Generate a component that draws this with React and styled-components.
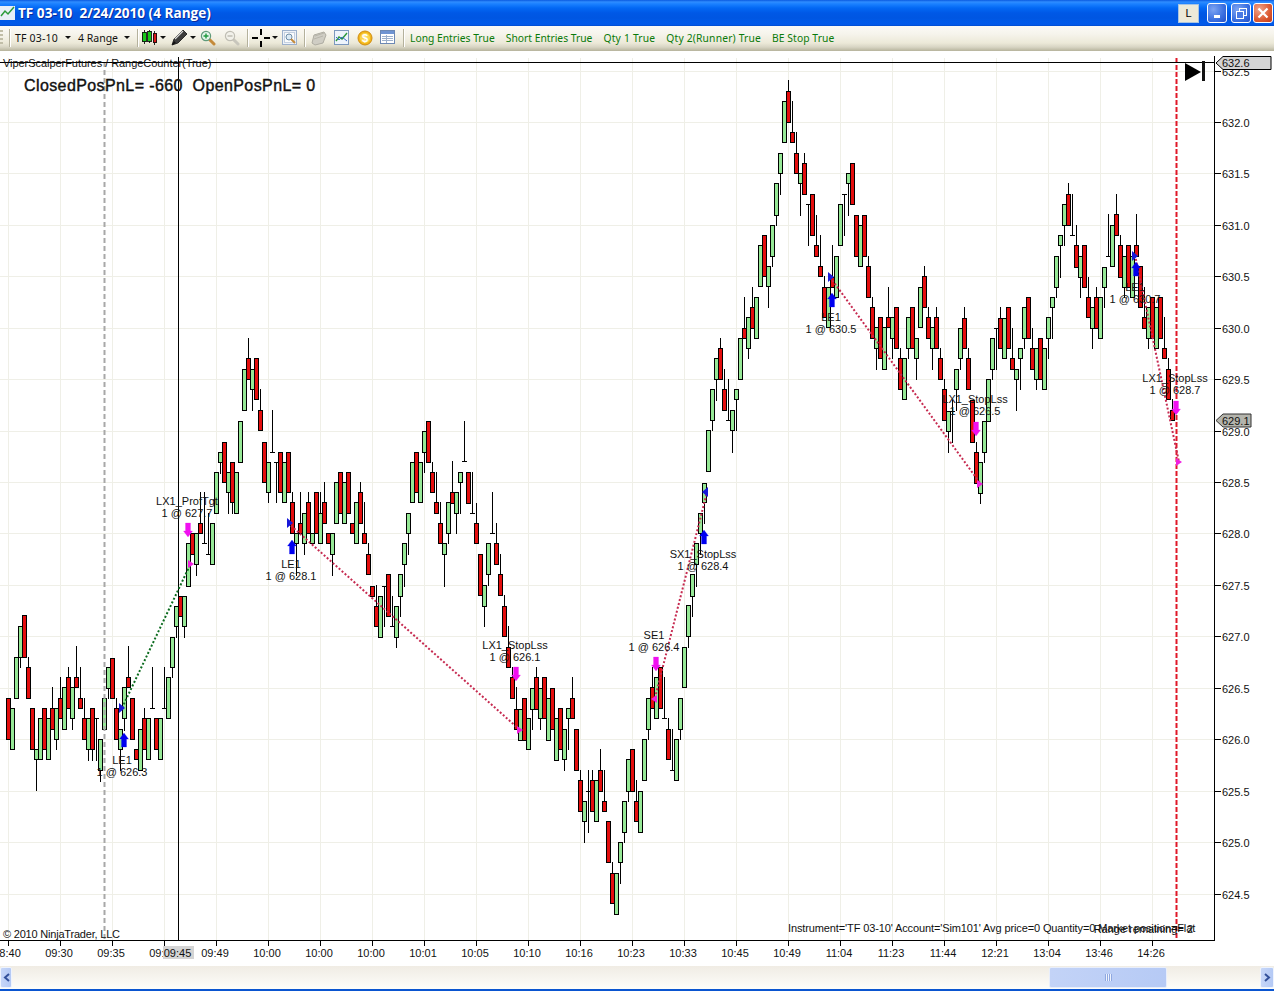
import React from 'react'
import styled, { createGlobalStyle } from 'styled-components'

const GlobalStyle = createGlobalStyle`
  html, body { margin: 0; padding: 0; background: #fff; }
  #root { width: 1274px; height: 991px; overflow: hidden; }
`

// ---- window chrome ----
const Window = styled.div`
  width: 1274px;
  height: 991px;
  display: flex;
  flex-direction: column;
  overflow: hidden;
  background: #fff;
`
const TitleBar = styled.div`
  height: 26px;
  flex: none;
  display: flex;
  align-items: center;
  padding-left: 0;
  background: linear-gradient(to bottom, #0a5ae0 0, #2f8dff 2px, #1a80ff 4px, #0368f4 8px, #0058e6 13px, #0056e2 18px, #005ae9 22px, #0258e8 25px, #0048c4 26px);
`
const AppIcon = styled.svg`
  width: 16px;
  height: 16px;
  margin: 0 2px 0 0;
  flex: none;
`
const TitleText = styled.span`
  font: bold 13.6px "Open Sans", "Liberation Sans", sans-serif;
  color: #fff;
  text-shadow: 1px 1px 0 #0a2a9a;
  white-space: pre;
  flex: 1;
  margin-top: -1px;
`
const WinButtons = styled.div`
  display: flex;
  align-items: center;
  height: 100%;
  padding-right: 1px;
`
const LButton = styled.div`
  width: 21px;
  height: 19px;
  box-sizing: border-box;
  margin-right: 8px;
  background: #ece9d8;
  border: 1px solid #a9c4e0;
  color: #000;
  font: 11px "Liberation Sans", sans-serif;
  display: flex;
  align-items: center;
  justify-content: center;
`
const WinButton = styled.div`
  width: 20px;
  height: 20px;
  box-sizing: border-box;
  margin-left: ${p => p.$gap || 0}px;
  border: 1px solid #fff;
  border-radius: 3px;
  display: flex;
  align-items: center;
  justify-content: center;
  background: ${p => p.$close
    ? 'radial-gradient(circle at 30% 30%, #f0a58c, #dc5a32 60%, #c0391a)'
    : 'radial-gradient(circle at 30% 30%, #7da4f2, #3a6fe0 60%, #2450c8)'};
`

// ---- toolbar ----
const Toolbar = styled.div`
  height: 25px;
  box-sizing: border-box;
  padding-bottom: 2px;
  flex: none;
  display: flex;
  align-items: center;
  background: linear-gradient(to bottom, #fbfaf6 0, #f6f4ec 8px, #ece9d8 17px, #d8d5c4 21px, #b6b39c 25px);
`
const Grip = styled.div`
  width: 3px;
  height: 16px;
  margin-right: 6px;
  background: repeating-linear-gradient(to bottom, #c1bea8 0 2px, transparent 2px 4px);
`
const Sep = styled.div`
  width: 1px;
  height: 18px;
  margin-left: ${p => p.$ml || 0}px;
  background: #b4b19c;
  border-right: 1px solid #fff;
  flex: none;
`
const Drop = styled.div`
  width: ${p => p.$w}px;
  padding: 0 7px 0 ${p => p.$pl || 0}px;
  box-sizing: border-box;
  display: flex;
  align-items: center;
  justify-content: space-between;
  font: 10.5px "Noto Sans", "Open Sans", sans-serif;
  letter-spacing: ${p => p.$ls || 0}px;
  color: #111;
`
const Caret = styled.i`
  width: 0;
  height: 0;
  flex: none;
  border-left: 3px solid transparent;
  border-right: 3px solid transparent;
  border-top: 3px solid #111;
`
const IconBtn = styled.div`
  width: ${p => p.$w}px;
  padding-left: ${p => p.$pl || 0}px;
  box-sizing: border-box;
  display: flex;
  align-items: center;
  justify-content: ${p => (p.$pl ? 'flex-start' : 'center')};
  gap: 2px;
  height: 20px;
`
const TradeButtons = styled.div`
  display: flex;
  margin-left: 5px;
  gap: 11px;
`
const TradeButton = styled.span`
  font: 10.3px "Noto Sans", "Open Sans", sans-serif;
  letter-spacing: ${p => p.$ls || 0}px;
  color: #0a7a0a;
  white-space: nowrap;
`

// ---- chart ----
const ChartArea = styled.div`
  flex: 1;
  min-height: 0;
`
const ChartSvg = styled.svg`
  display: block;
  width: 1274px;
  height: 915px;
`
const Bar = styled.g`
  shape-rendering: crispEdges;
`
const Label = styled.text`
  font: 11px "Liberation Sans", sans-serif;
  fill: #111;
  letter-spacing: ${p => p.$ls || 0}px;
  text-anchor: ${p => p.$anchor || 'start'};
`
const Headline = styled.text`
  font: 16px "Liberation Sans", sans-serif;
  fill: #111;
  stroke: #111;
  stroke-width: 0.4px;
  letter-spacing: 0.4px;
  white-space: pre;
`

// ---- scrollbar ----
const ScrollBar = styled.div`
  height: 23px;
  flex: none;
  display: flex;
  align-items: center;
  justify-content: space-between;
  background: linear-gradient(to bottom, #f0ece4, #fdfdfa);
  position: relative;
`
const ScrollBtn = styled.div`
  width: ${p => p.$w}px;
  height: 21px;
  background: linear-gradient(to right, #c6d6f8, #b4c9f5);
  border: 1px solid #eef3fd;
  border-radius: 2px;
  color: #33519b;
  display: flex;
  align-items: center;
  justify-content: center;
  box-sizing: border-box;
`
const ScrollThumb = styled.div`
  position: absolute;
  left: 1049px;
  top: 1px;
  width: 118px;
  height: 21px;
  box-sizing: border-box;
  background: linear-gradient(to right, #c3d3f7, #b6caf5);
  border: 1px solid #e8eefb;
  border-radius: 2px;
  display: flex;
  align-items: center;
  justify-content: center;
`
const ThumbGrip = styled.div`
  width: 7px;
  height: 7px;
  background: repeating-linear-gradient(to right, #8fa8e0 0 1px, #eef3fd 1px 2px);
`
const WindowEdge = styled.div`
  height: 2px;
  flex: none;
  background: #0a55d0;
`

// ---- data ----
const R = (top, bot, hi = top, lo = bot) => ({ c: 'r', top, bot, hi, lo })
const G = (top, bot, hi = top, lo = bot) => ({ c: 'g', top, bot, hi, lo })
const D = (hi, lo, y) => ({ c: 'd', top: y, bot: y, hi, lo })

// one bar every 4px, starting at x=8
const BARS = [
  R(698,739), G(708,749), G(657,698), G(626,657,626,667), R(615,657), R(667,698,657), R(708,749), G(749,759,749,790),
  G(718,759), R(708,749), G(718,759), R(708,729,687), G(708,739,708,749), R(698,718,677), G(687,729), R(677,708,667),
  G(687,718,687,729), R(677,687,646), R(698,708,667), R(718,739,698), G(718,749,718,760), R(708,749,708,760), D(718,760,718), G(739,770,739,781),
  G(698,729), G(667,688,667,698), R(658,698), R(708,739,698), G(729,749,729,770), G(687,718,687,730), R(677,687,646), R(698,739),
  R(749,759), G(729,770), R(718,749,708), G(718,759), D(667,708,708), R(718,749), G(718,759), D(667,708,708),
  G(677,718), G(637,667,637,677), G(606,626,606,637), R(596,616), G(596,626,596,637), G(543,586), R(533,554), G(533,564,533,575),
  R(523,533,492), D(492,543,543), D(513,554,554), G(523,564), G(472,513), G(452,462,452,473), R(442,482), G(472,492,472,513),
  R(462,502,462,513), G(472,513), G(421,462), G(369,410), R(358,379,338), G(369,389,369,410), R(358,399), R(410,430,389),
  R(442,482), G(462,492,462,502), D(410,452,452), D(462,502,462), R(452,492), G(462,502), R(452,492), R(502,533,492),
  G(533,543,533,575), R(523,533,492), G(513,543,513,554), R(502,533,492), G(533,543), R(492,533), G(513,543,492,543), R(502,523,482),
  R(533,543), G(533,554,533,575), G(482,523), R(472,513), G(482,523), R(472,513), R(523,533), G(502,543),
  R(492,523,482), R(533,543,502), R(554,574,543), R(586,596), R(606,626,585), G(596,637), D(586,626,586), R(574,616),
  D(596,626,626), G(606,637,606,647), G(574,596,574,616), G(543,564,543,586), G(513,533,513,554), G(462,502), R(452,492), G(462,502),
  G(431,452,431,472), R(421,462), R(472,492,462), R(502,513,472), R(523,543,502), G(543,554,543,586), G(502,533,502,543), R(492,503,461),
  G(492,513,492,533), G(472,482,472,513), D(421,461,461), R(472,503), D(472,513,513), R(523,543,503), R(554,595), G(585,606,585,626),
  G(543,574,543,585), D(492,533,533), R(543,564,523), R(574,595,554), R(606,636,595), R(647,667,626), R(677,698,667), R(709,729,687),
  G(709,740), R(698,740), G(718,749), G(688,709,688,729), R(677,709,667), G(688,718,688,729), R(677,718), G(698,740),
  R(688,729), G(718,760), R(708,749), G(729,759,729,770), G(708,718,708,749), R(698,718,677), R(729,770), R(780,811,770),
  G(801,821,801,842), D(770,832,791), R(780,811,770), G(780,821), R(770,791,749), R(801,811,770), R(821,862), R(873,903,862),
  G(873,914), G(842,862,842,883), G(801,832,801,842), G(759,791,759,801), R(749,791), R(801,821,780), G(791,832), G(739,780),
  G(698,729,698,739), R(687,708,667), G(677,718), R(667,708), D(677,718,718), R(729,759,718), D(729,770,770), G(739,780),
  G(698,729,698,739), G(647,687), G(605,636,605,647), G(574,596,574,616), G(543,564,543,586), G(513,533,513,554), G(483,502,483,523), G(430,471),
  G(389,420,389,430), G(358,379,358,400), R(348,379,338), R(389,410,369), D(379,420,420), G(410,430,410,452), G(389,399,389,430), G(338,379),
  R(328,338,297), G(317,348,317,358), R(307,328,287), G(297,338), G(245,286), R(235,276), G(266,286,266,307), G(225,256,225,266),
  G(183,215,183,225), G(153,173,153,194), G(101,142), R(91,122,80), R(132,142,101), R(153,173,132), G(173,183,173,215), R(163,194,153),
  D(204,245,204), R(194,235), R(245,256,215), R(266,276,235), R(287,317,276), G(287,327), R(277,287,245), G(256,297),
  G(204,245), D(194,235,194), G(173,183,173,215), R(163,204), R(215,256), G(225,266), R(215,256), R(266,297,256),
  R(307,338,297), G(327,348,327,369), R(317,358), G(327,369), R(317,327,287), G(317,338,317,358), R(307,348), R(358,389,348),
  G(358,399), G(317,348,317,358), R(307,348), G(338,358,338,379), G(287,327), R(276,307,266), R(317,338,307), G(327,348,327,369),
  R(317,348,307), R(358,379,348), R(389,420,379), G(411,431,411,452), D(400,442,411), G(369,389,369,410), G(328,358,328,369), R(318,348,307),
  R(358,389,348), R(400,442), R(452,483,442), G(462,493,462,503), G(421,452,421,462), G(379,421), G(338,369,338,379), D(328,369,328),
  R(318,348,307), G(318,358), R(307,348), R(358,369,328), G(369,379,369,410), G(348,358,348,389), G(307,338,307,348), R(297,338),
  R(348,369,328), G(348,379,348,389), R(338,379), G(348,389), G(317,338,317,358), G(297,307,297,338), G(256,287,256,297), G(235,245,235,277),
  G(204,225,204,245), R(194,225,183), D(194,235,235), R(245,267,225), G(256,277,256,297), R(245,287), R(297,317,277), G(307,328,307,348),
  R(297,328,287), G(297,338), G(267,287,267,307), D(214,256,256), G(225,266), R(214,235,194), R(245,277,235), G(256,287,256,297),
  R(245,287), G(256,297), R(245,256,214), R(266,307), R(317,328,287), G(307,338,307,348), R(297,338), G(307,348),
  R(297,338), R(348,358,317), R(369,399,358), R(410,420,399),
]

const TIMES = ['08:40','09:30','09:35','09:40','09:49','10:00','10:00','10:00','10:01','10:05','10:10','10:16','10:23','10:33','10:45','10:49','11:04','11:23','11:44','12:21','13:04','13:46','14:26']
const PRICES = ['632.5','632.0','631.5','631.0','630.5','630.0','629.5','629.0','628.5','628.0','627.5','627.0','626.5','626.0','625.5','625.0','624.5']
const priceY = i => Math.round(71.5 + i * 51.44)
const gridY = i => priceY(i) - 0.5

const TRADE_LINES = [
  { x1: 122, y1: 708, x2: 191, y2: 563, color: '#0b6b1e' },
  { x1: 288, y1: 523, x2: 520, y2: 730, color: '#c62a50' },
  { x1: 655, y1: 698, x2: 707, y2: 492, color: '#c62a50' },
  { x1: 830, y1: 277, x2: 980, y2: 483, color: '#c62a50' },
  { x1: 1135, y1: 255, x2: 1179, y2: 462, color: '#c62a50' },
]
const UP_ARROWS = [[124, 733], [292, 540], [704, 530], [832, 293], [1136, 262]]
const DOWN_ARROWS = [[188, 523], [516, 667], [656, 657], [976, 422], [1176, 401]]
const BLUE_MARKS = [[120, 708, 1], [288, 523, 1], [707, 492, -1], [829, 277, 1], [1133, 256, 1]]
const PINK_MARKS = [[191, 564, -1], [520, 730, -1], [654, 699, 1], [980, 484, -1], [1179, 462, -1]]
const NOTES = [
  [187, 505, 'LX1_ProfTgt', '1 @ 627.7'],
  [122, 764, 'LE1', '1 @ 626.3'],
  [291, 568, 'LE1', '1 @ 628.1'],
  [515, 649, 'LX1_StopLss', '1 @ 626.1'],
  [654, 639, 'SE1', '1 @ 626.4'],
  [703, 558, 'SX1_StopLss', '1 @ 628.4'],
  [831, 321, 'LE1', '1 @ 630.5'],
  [975, 403, 'LX1_StopLss', '1 @ 626.5'],
  [1135, 291, 'LE1', '1 @ 630.7'],
  [1175, 382, 'LX1_StopLss', '1 @ 628.7'],
]
const GRID = '#efefe7'

// ---- icons ----
const Candles = () => (
  <svg width="18" height="17" viewBox="0 0 18 17" shapeRendering="crispEdges">
    <path d="M2.500 0v16M8.500 0v15M14.500 1v16" stroke="#111" />
    <rect x="0.500" y="2.500" width="4" height="11" fill="#18c818" stroke="#111" />
    <rect x="6.500" y="1.500" width="4" height="11" fill="#18c818" stroke="#111" />
    <rect x="12.500" y="3.500" width="4" height="11" fill="#d81818" stroke="#111" />
  </svg>
)
const Pencil = () => (
  <svg width="17" height="17" viewBox="0 0 17 17">
    <path d="M1 16l2-6L12 1l4 4-9 9z" fill="#3c3c3c" stroke="#111" strokeWidth="0.8" />
    <path d="M4 10l8-8" stroke="#d8d8d8" strokeWidth="1.2" />
    <path d="M1 16l2-4 2 2z" fill="#111" />
  </svg>
)
const Magnifier = ({ active, plus }) => (
  <svg width="16" height="16" viewBox="0 0 16 16">
    <path d="M9 9l5 5" stroke={active ? '#c48a3a' : '#c8c6bc'} strokeWidth="3" strokeLinecap="round" />
    <circle cx="6" cy="6" r="4.600" fill={active ? '#e4f4ea' : '#f2f1ea'} stroke={active ? '#5f9a7a' : '#c0beb4'} strokeWidth="1.200" />
    <path d={plus ? 'M3.500 6h5M6 3.500v5' : 'M3.500 6h5'} stroke={active ? '#1f9a3f' : '#bdbbb0'} strokeWidth="1.400" />
  </svg>
)
const Crosshair = () => (
  <svg width="18" height="18" viewBox="0 0 18 18" shapeRendering="crispEdges">
    <path d="M0 9h6M12 9h6M9 0v6M9 12v6" stroke="#000" strokeWidth="2" />
  </svg>
)
const FrameZoom = () => (
  <svg width="16" height="16" viewBox="0 0 16 16">
    <rect x="0.500" y="0.500" width="14" height="14" fill="#eef2f8" stroke="#9cb0cc" />
    <rect x="2.500" y="2.500" width="10" height="10" fill="#fbfcfd" stroke="#c4d0e0" />
    <circle cx="7" cy="7" r="3" fill="#dcebf6" stroke="#6f8da8" />
    <path d="M9 9l4 4" stroke="#c48a3a" strokeWidth="2" />
  </svg>
)
const GrayStack = () => (
  <svg width="16" height="16" viewBox="0 0 16 16">
    <path d="M1 13l2-8 10-3 2 3-3 8-8 2z" fill="#cfcdc4" stroke="#aeaca2" />
    <path d="M4 6l9-3M3 9l9-3" stroke="#b8b6ac" />
  </svg>
)
const MiniChart = () => (
  <svg width="16" height="16" viewBox="0 0 16 16">
    <rect x="0.500" y="0.500" width="14" height="14" fill="#eef4fc" stroke="#7c98be" />
    <path d="M2 11l3-4 3 2 5-6" fill="none" stroke="#2a9a3a" strokeWidth="1.400" />
    <path d="M2 7l3 3 3-3 5 4" fill="none" stroke="#3c6cc8" />
  </svg>
)
const Coin = () => (
  <svg width="16" height="16" viewBox="0 0 16 16">
    <circle cx="8" cy="8" r="7" fill="#f2b61c" stroke="#d08c10" />
    <circle cx="8" cy="8" r="5" fill="#fbd650" />
    <text x="8" y="12" textAnchor="middle" fontSize="11" fontWeight="bold" fontFamily="Liberation Sans" fill="#fff">$</text>
  </svg>
)
const TableIcon = () => (
  <svg width="16" height="15" viewBox="0 0 16 15" shapeRendering="crispEdges">
    <rect x="0.500" y="0.500" width="14" height="13" fill="#fff" stroke="#6c88b4" />
    <rect x="1" y="1" width="13" height="3" fill="#6f94d2" />
    <path d="M2 6.500h11M2 8.500h11M2 10.500h11M6.500 5v8" stroke="#9cb0cc" />
  </svg>
)

const Candle = ({ bar, x }) => {
  if (bar.c === 'd') {
    return (
      <Bar>
        <line x1={x + 0.5} x2={x + 0.5} y1={bar.hi} y2={bar.lo + 1} stroke="#000" />
        <line x1={x - 2} x2={x + 3} y1={bar.top + 0.5} y2={bar.top + 0.5} stroke="#000" />
      </Bar>
    )
  }
  return (
    <Bar>
      <line x1={x + 0.5} x2={x + 0.5} y1={bar.hi} y2={bar.lo + 1} stroke="#000" />
      <rect x={x - 1.5} y={bar.top + 0.5} width="4" height={bar.bot - bar.top} fill={bar.c === 'r' ? '#e40e0e' : '#96e896'} stroke="#000" />
    </Bar>
  )
}

const Chart = () => (
  <ChartSvg viewBox="0 51 1274 915">
    {/* grid */}
    <g shapeRendering="crispEdges">
      {PRICES.map((p, i) => <line key={i} x1="0" x2="1214" y1={gridY(i)} y2={gridY(i)} stroke={GRID} />)}
      {TIMES.map((t, i) => <line key={i} x1={8.5 + i * 52} x2={8.5 + i * 52} y1="58" y2="940" stroke={GRID} />)}
    </g>

    {BARS.map((bar, i) => <Candle key={i} bar={bar} x={8 + i * 4} />)}

    {/* cursors */}
    <line x1="104.500" x2="104.500" y1="62" y2="940" stroke="#a8a8a8" strokeWidth="2" strokeDasharray="5 3" />
    <line x1="178.500" x2="178.500" y1="57" y2="940" stroke="#000" />
    <line x1="1176.500" x2="1176.500" y1="58" y2="940" stroke="#e01828" strokeWidth="2" strokeDasharray="5 2" />

    {/* trades */}
    {TRADE_LINES.map((l, i) => (
      <line key={i} x1={l.x1} y1={l.y1} x2={l.x2} y2={l.y2} stroke={l.color} strokeWidth="2" strokeDasharray="2 2" />
    ))}
    {UP_ARROWS.map(([x, y], i) => (
      <path key={i} d={`M${x} ${y}l4.500 6h-2v8h-5v-8h-2z`} fill="#0000f0" stroke="#0000f0" strokeOpacity="0.25" />
    ))}
    {DOWN_ARROWS.map(([x, y], i) => (
      <path key={i} d={`M${x - 2.5} ${y}h5v8h2l-4.500 6-4.500-6h2z`} fill="#f010f0" stroke="#f010f0" strokeOpacity="0.25" />
    ))}
    {BLUE_MARKS.map(([x, y, d], i) => (
      <path key={i} d={`M${x + 5 * d} ${y}l${-6 * d} -5v10z`} fill="#1818d8" />
    ))}
    {PINK_MARKS.map(([x, y, d], i) => (
      <path key={i} d={`M${x - 3 * d} ${y}l${6 * d} -4v8z`} fill="#f020e0" />
    ))}
    {NOTES.map(([x, y, a, b], i) => (
      <g key={i}>
        <Label $anchor="middle" x={x} y={y}>{a}</Label>
        <Label $anchor="middle" x={x} y={y + 12}>{b}</Label>
      </g>
    ))}

    {/* frame and axes */}
    <g shapeRendering="crispEdges">
      <line x1="0" x2="1214" y1="62.500" y2="62.500" stroke="#000" />
      <line x1="0" x2="1215" y1="940.500" y2="940.500" stroke="#000" />
      <line x1="1214.500" x2="1214.500" y1="56" y2="941" stroke="#000" />
      {PRICES.map((p, i) => <line key={i} x1="1215" x2="1221" y1={gridY(i)} y2={gridY(i)} stroke="#000" />)}
      {TIMES.map((t, i) => <line key={i} x1={8.5 + i * 52} x2={8.5 + i * 52} y1="941" y2="946" stroke="#000" />)}
    </g>
    {PRICES.map((p, i) => <Label key={i} x="1222" y={priceY(i) + 4}>{p}</Label>)}
    {TIMES.map((t, i) => <Label key={i} $anchor="middle" x={7 + i * 52} y="957">{t}</Label>)}

    {/* crosshair time */}
    <rect x="163" y="946" width="31" height="13" fill="#d4d4d4" />
    <Label $anchor="middle" x="177.500" y="957">09:45</Label>

    {/* price tags */}
    <path d="M1216 63l7-6.500h48v13h-48z" fill="#d4d4d4" stroke="#000" />
    <Label x="1222" y="67">632.6</Label>
    <path d="M1216 420.500l7-6.500h28v13h-28z" fill="#b4b4ac" stroke="#333" />
    <Label x="1222" y="425">629.1</Label>

    {/* jump-to-end button */}
    <path d="M1185 63l16 9-16 9z" fill="#000" />
    <rect x="1202" y="61" width="3" height="20" fill="#111" />

    <Label x="3" y="67" $ls={-0.05}>ViperScalperFutures / RangeCounter(True)</Label>
    <Headline x="24" y="91" xmlSpace="preserve">ClosedPosPnL= -660  OpenPosPnL= 0</Headline>
    <Label x="3" y="938" $ls={-0.2}>© 2010 NinjaTrader, LLC</Label>
    <Label x="788" y="932" $ls={-0.12}>Instrument='TF 03-10' Account='Sim101' Avg price=0 Quantity=0 Market position=Flat</Label>
    <Label $anchor="end" x="1193" y="933">Range remaining= 2</Label>
  </ChartSvg>
)

export default function App() {
  return (
    <Window>
      <GlobalStyle />
      <TitleBar>
        <AppIcon viewBox="0 0 16 16">
          <rect width="15" height="14" y="1" fill="#e8eef8" />
          <path d="M1 11l4-5 3 3 6-7" fill="none" stroke="#2a9a3a" strokeWidth="1.500" />
        </AppIcon>
        <TitleText>TF 03-10  2/24/2010 (4 Range)</TitleText>
        <WinButtons>
          <LButton>L</LButton>
          <WinButton>
            <svg width="9" height="9" viewBox="0 0 9 9"><rect x="1" y="6" width="6" height="3" fill="#fff" /></svg>
          </WinButton>
          <WinButton $gap={4}>
            <svg width="11" height="11" viewBox="0 0 11 11" fill="none" stroke="#fff"><rect x="3.500" y="0.500" width="7" height="7" /><rect x="0.500" y="3.500" width="7" height="7" fill="#4a7ae4" /></svg>
          </WinButton>
          <WinButton $gap={2} $close>
            <svg width="12" height="12" viewBox="0 0 12 12"><path d="M1.500 1.500l9 9M10.500 1.500l-9 9" stroke="#fff" strokeWidth="2.200" /></svg>
          </WinButton>
        </WinButtons>
      </TitleBar>

      <Toolbar>
        <Grip />
        <Sep />
        <Drop $w={67} $pl={4} $ls={0.2}>TF 03-10<Caret /></Drop>
        <Drop $w={59}>4 Range<Caret /></Drop>
        <Sep />
        <IconBtn $w={27} $pl={3}><Candles /><Caret /></IconBtn>
        <IconBtn $w={30} $pl={5}><Pencil /><Caret /></IconBtn>
        <IconBtn $w={24}><Magnifier active plus /></IconBtn>
        <IconBtn $w={24}><Magnifier /></IconBtn>
        <Sep $ml={3} />
        <IconBtn $w={29} $pl={3}><Crosshair /><Caret /></IconBtn>
        <IconBtn $w={24}><FrameZoom /></IconBtn>
        <Sep $ml={2} />
        <IconBtn $w={26}><GrayStack /></IconBtn>
        <IconBtn $w={20}><MiniChart /></IconBtn>
        <IconBtn $w={26}><Coin /></IconBtn>
        <IconBtn $w={20}><TableIcon /></IconBtn>
        <Sep $ml={5} />
        <TradeButtons>
          <TradeButton>Long Entries True</TradeButton>
          <TradeButton>Short Entries True</TradeButton>
          <TradeButton $ls={0.2}>Qty 1 True</TradeButton>
          <TradeButton $ls={0.17}>Qty 2(Runner) True</TradeButton>
          <TradeButton $ls={0.08}>BE Stop True</TradeButton>
        </TradeButtons>
      </Toolbar>

      <ChartArea><Chart /></ChartArea>

      <ScrollBar>
        <ScrollBtn $w={12}>
          <svg width="7" height="9" viewBox="0 0 7 9"><path d="M6 1L2 4.500l4 3.500" fill="none" stroke="#33519b" strokeWidth="2" /></svg>
        </ScrollBtn>
        <ScrollThumb><ThumbGrip /></ScrollThumb>
        <ScrollBtn $w={14}>
          <svg width="7" height="9" viewBox="0 0 7 9"><path d="M1 1l4 3.500-4 3.500" fill="none" stroke="#33519b" strokeWidth="2" /></svg>
        </ScrollBtn>
      </ScrollBar>
      <WindowEdge />
    </Window>
  )
}
